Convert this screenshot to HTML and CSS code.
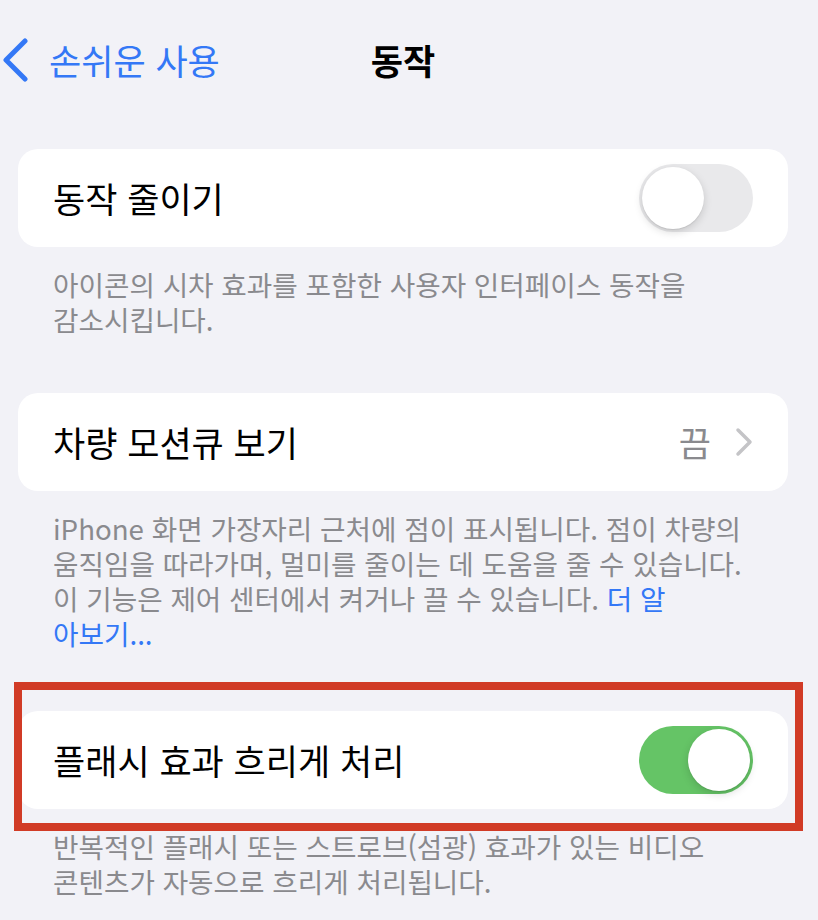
FILE: index.html
```html
<!DOCTYPE html>
<html lang="ko">
<head>
<meta charset="UTF-8">
<meta name="viewport" content="width=device-width, initial-scale=1.0">
<title>동작</title>
<link rel="stylesheet" href="styles.css">
</head>
<body>
<div class="nav">
<a class="back" href="#">
<svg class="back-icon" width="26" height="44" viewBox="0 0 26 44"><polyline points="23,3 4,22 23,41" fill="none" stroke="#3478f6" stroke-width="5" stroke-linecap="round" stroke-linejoin="round"/></svg>
<span>손쉬운 사용</span>
</a>
<h1 class="title">동작</h1>
</div>

<div class="group first">
<div class="card">
<span class="label">동작 줄이기</span>
<div class="switch"><div class="knob"></div></div>
</div>
<p class="footer">아이콘의 시차 효과를 포함한 사용자 인터페이스 동작을<br>감소시킵니다.</p>
</div>

<div class="group">
<div class="card">
<span class="label">차량 모션큐 보기</span>
<div class="detail">
<span class="value">끔</span>
<svg width="18" height="30" viewBox="0 0 18 30"><polyline points="3,3 15,15 3,27" fill="none" stroke="#c4c4c7" stroke-width="3.5" stroke-linecap="round" stroke-linejoin="round"/></svg>
</div>
</div>
<p class="footer">iPhone 화면 가장자리 근처에 점이 표시됩니다. 점이 차량의<br>움직임을 따라가며, 멀미를 줄이는 데 도움을 줄 수 있습니다.<br>이 기능은 제어 센터에서 켜거나 끌 수 있습니다. <a class="link" href="#">더 알<br>아보기...</a></p>
</div>

<div class="group last">
<div class="card highlighted">
<span class="label">플래시 효과 흐리게 처리</span>
<div class="switch on"><div class="knob"></div></div>
<div class="mark"></div>
</div>
<p class="footer">반복적인 플래시 또는 스트로브(섬광) 효과가 있는 비디오<br>콘텐츠가 자동으로 흐리게 처리됩니다.</p>
</div>
</body>
</html>
```

FILE: styles.css
```css
body {
    margin: 0;
    background-color: #f2f2f7;
    font-family: 'Noto Sans CJK KR', 'Noto Sans', sans-serif;
    color: #000;
    width: 818px;
    height: 920px;
    overflow: hidden;
}
.nav {
    position: relative;
    height: 120px;
    display: flex;
    align-items: center;
    justify-content: center;
}
.back {
    position: absolute;
    left: 2px;
    top: 38px;
    display: flex;
    align-items: center;
    gap: 21px;
    color: #3478f6;
    text-decoration: none;
    font-size: 35px;
    line-height: 44px;
}
.back-icon {
    display: block;
}
.title {
    margin: 0 0 0 -12px;
    font-size: 35px;
    font-weight: 700;
    line-height: 44px;
}
.group {
    margin: 0 30px 0 18px;
}
.group.first {
    margin-top: 29px;
}
.group + .group {
    margin-top: 56px;
}
.group.last {
    margin-top: 60px;
}
.card {
    position: relative;
    height: 98px;
    background-color: #fff;
    border-radius: 20px;
    display: flex;
    align-items: center;
    justify-content: space-between;
    padding: 0 35px 0 35px;
}
.label {
    font-size: 35px;
    line-height: 42px;
}
.switch {
    position: relative;
    width: 114px;
    height: 68px;
    border-radius: 34px;
    background-color: #e9e9eb;
}
.switch .knob {
    position: absolute;
    top: 3px;
    left: 3px;
    width: 62px;
    height: 62px;
    border-radius: 50%;
    background-color: #fff;
    box-shadow: 0 3px 8px rgba(0,0,0,0.15), 0 1px 1px rgba(0,0,0,0.08);
}
.switch.on {
    background-color: #65c466;
}
.switch.on .knob {
    left: 49px;
}
.detail {
    display: flex;
    align-items: center;
    gap: 24px;
}
.detail svg {
    display: block;
}
.value {
    font-size: 35px;
    line-height: 42px;
    color: #8a8a8e;
}
.footer {
    margin: 0;
    padding: 20px 0 0 35px;
    font-size: 27.7px;
    line-height: 35px;
    color: #8a8a8e;
}
.link {
    color: #3478f6;
    text-decoration: none;
}
.mark {
    position: absolute;
    top: -29px;
    left: -4px;
    right: -15px;
    bottom: -22px;
    border: 8px solid #d13b26;
    z-index: 2;
}
```
